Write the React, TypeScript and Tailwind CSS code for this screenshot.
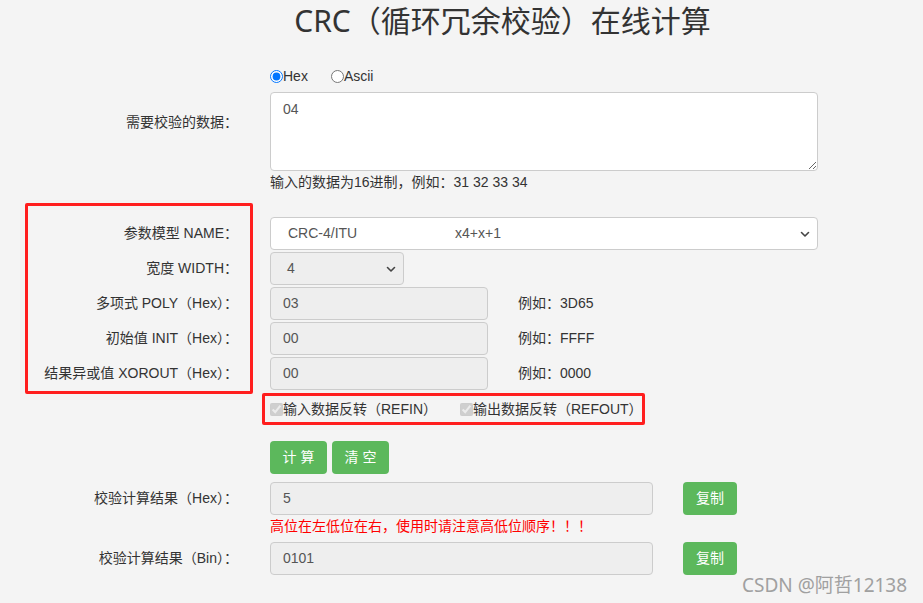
import type { ReactNode } from 'react'

const FONT = "font-['Liberation_Sans','Noto_Sans_CJK_SC',sans-serif]"

function Chevron() {
  return (
    <svg width="12" height="12" viewBox="0 0 12 12" className="shrink-0">
      <path d="M2.5 4.5 L6 8 L9.5 4.5" fill="none" stroke="#444" strokeWidth="1.6" strokeLinecap="round" strokeLinejoin="round" />
    </svg>
  )
}

function Row({ label, children, className = '' }: { label: string; children: ReactNode; className?: string }) {
  return (
    <div className={`flex items-center ${className}`}>
      <div className="w-[238px] shrink-0 text-right text-[14px] text-[#333]">{label}</div>
      <div className="ml-[32px] flex items-center">{children}</div>
    </div>
  )
}

function GrayInput({ value, width }: { value: string; width: string }) {
  return (
    <div className={`${width} h-[33px] flex items-center pl-[12px] rounded-[4px] border border-[#ccc] bg-[#eee] text-[14px] text-[#555]`}>
      {value}
    </div>
  )
}

function GreenButton({ children, className = '' }: { children: ReactNode; className?: string }) {
  return (
    <button className={`h-[33px] rounded-[4px] bg-[#5cb85c] text-white text-[14px] ${className}`}>{children}</button>
  )
}

export default function App() {
  return (
    <div className={`relative min-h-screen bg-[#f4f4f4] ${FONT} overflow-hidden`}>
      <h1 className="pt-[1px] pl-[82px] text-center text-[30px] leading-[40px] text-[#333] font-['Noto_Sans','Noto_Sans_CJK_SC',sans-serif]">
        CRC（循环冗余校验）在线计算
      </h1>

      {/* data type */}
      <div className="mt-[25px] ml-[270px] flex items-center h-[20px] text-[14px] text-[#333]">
        <label className="flex items-center">
          <input type="radio" name="t" defaultChecked className="m-0 w-[13px] h-[13px]" />
          <span>Hex</span>
        </label>
        <label className="flex items-center ml-[23px]">
          <input type="radio" name="t" className="m-0 w-[13px] h-[13px]" />
          <span>Ascii</span>
        </label>
      </div>

      {/* data */}
      <div className="mt-[6px] flex items-start">
        <div className="w-[238px] shrink-0 text-right text-[14px] text-[#333] pt-[20px]">需要校验的数据：</div>
        <textarea
          defaultValue="04"
          className="ml-[32px] w-[548px] h-[79px] rounded-[4px] border border-[#ccc] bg-white pl-[12px] pt-[6px] text-[14px] text-[#555] outline-none"
        />
      </div>
      <div className="mt-[1px] ml-[270px] text-[14px] leading-[20px] text-[#333]">输入的数据为16进制，例如：31 32 33 34</div>

      {/* params */}
      <div className="mt-[25px] flex flex-col gap-[2px]">
        <Row label="参数模型 NAME：">
          <div className="w-[548px] h-[33px] flex items-center pl-[17px] pr-[6px] rounded-[4px] border border-[#ccc] bg-white text-[14px] text-[#555]">
            <span className="w-[167px]">CRC-4/ITU</span>
            <span className="flex-1">x4+x+1</span>
            <Chevron />
          </div>
        </Row>
        <Row label="宽度 WIDTH：">
          <div className="w-[134px] h-[33px] flex items-center pl-[16px] pr-[6px] rounded-[4px] border border-[#ccc] bg-[#eee] text-[14px] text-[#555]">
            <span className="flex-1">4</span>
            <Chevron />
          </div>
        </Row>
        <Row label="多项式 POLY（Hex）：">
          <GrayInput value="03" width="w-[218px]" />
          <span className="ml-[30px] text-[14px] text-[#333]">例如：3D65</span>
        </Row>
        <Row label="初始值 INIT（Hex）：">
          <GrayInput value="00" width="w-[218px]" />
          <span className="ml-[30px] text-[14px] text-[#333]">例如：FFFF</span>
        </Row>
        <Row label="结果异或值 XOROUT（Hex）：">
          <GrayInput value="00" width="w-[218px]" />
          <span className="ml-[30px] text-[14px] text-[#333]">例如：0000</span>
        </Row>
      </div>

      {/* reflect options */}
      <div className="mt-[9px] ml-[270px] flex items-center h-[20px] text-[14px] text-[#333]">
        <label className="flex items-center w-[190px]">
          <input type="checkbox" checked disabled readOnly className="m-0 w-[13px] h-[13px]" />
          <span>输入数据反转（REFIN）</span>
        </label>
        <label className="flex items-center">
          <input type="checkbox" checked disabled readOnly className="m-0 w-[13px] h-[13px]" />
          <span>输出数据反转（REFOUT）</span>
        </label>
      </div>

      {/* actions */}
      <div className="mt-[22px] ml-[270px] flex gap-[5px]">
        <GreenButton className="w-[57px]">计 算</GreenButton>
        <GreenButton className="w-[57px]">清 空</GreenButton>
      </div>

      {/* results */}
      <Row label="校验计算结果（Hex）：" className="mt-[8px]">
        <GrayInput value="5" width="w-[383px]" />
        <GreenButton className="ml-[30px] w-[54px]">复制</GreenButton>
      </Row>
      <div className="mt-[1px] ml-[270px] text-[14px] leading-[20px] text-[#ff0000]">高位在左低位在右，使用时请注意高低位顺序！！！</div>
      <Row label="校验计算结果（Bin）：" className="mt-[6px]">
        <GrayInput value="0101" width="w-[383px]" />
        <GreenButton className="ml-[30px] w-[54px]">复制</GreenButton>
      </Row>

      {/* annotation boxes */}
      <div className="absolute left-[25px] top-[203px] w-[228px] h-[191px] border-[3px] border-[#ff1e1e] rounded-[2px] pointer-events-none" />
      <div className="absolute left-[262px] top-[393px] w-[383px] h-[32px] border-[3px] border-[#ff1e1e] rounded-[2px] pointer-events-none" />

      {/* watermark */}
      <div className="absolute left-[742px] top-[571px] text-[19px] leading-[28px] text-[#a0a0a0] font-['Noto_Sans','Noto_Sans_CJK_SC',sans-serif]">
        CSDN @阿哲12138
      </div>
    </div>
  )
}
